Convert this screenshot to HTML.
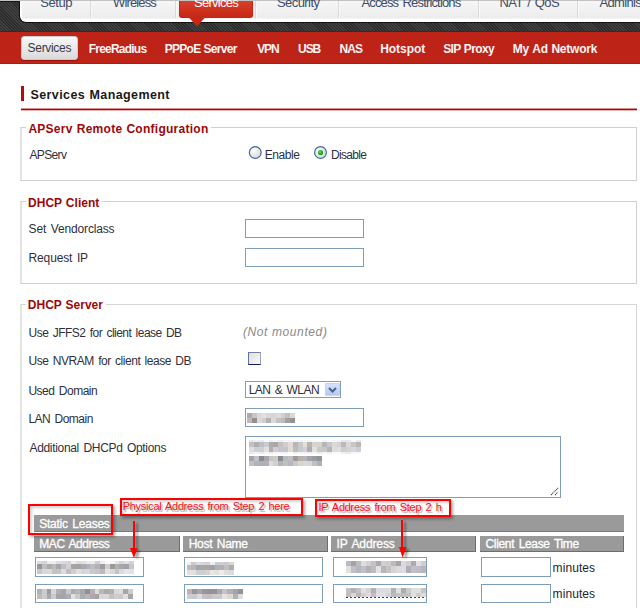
<!DOCTYPE html>
<html><head><meta charset="utf-8">
<style>
html,body{margin:0;padding:0;width:640px;height:608px;overflow:hidden;background:#fff;position:relative}
div{box-sizing:border-box}
.a{position:absolute}
.t{position:absolute;white-space:nowrap;font-family:"Liberation Sans",sans-serif;line-height:20px}
.inp{position:absolute;border:1px solid #7f9db9;background:#fff}
.hdr{position:absolute;background:#9a9a9a;border-right:1px solid #6e6e6e;border-bottom:1px solid #6e6e6e}
.div{position:absolute;top:1px;width:2px;height:17px;border-left:1px solid #dadada;border-right:1px solid #f9f9f9}
.box{position:absolute;border:2px solid #ff0000;box-shadow:2px 2px 3px rgba(0,0,0,0.35), inset 2px 2px 3px rgba(0,0,0,0.18)}
</style></head><body>
<!-- dark striped bar -->
<div class="a" style="left:0;top:0;width:640px;height:32px;background:repeating-linear-gradient(45deg,#2c2c2c 0px,#2c2c2c 1.1px,#404040 1.1px,#404040 2.2px)"></div>
<div class="a" style="left:0;top:31px;width:640px;height:1px;background:#173636"></div>
<div class="a" style="left:0;top:1px;width:20px;height:1px;background:#151515"></div>
<div class="a" style="left:0;top:0;width:640px;height:1px;background:#c2c2c2"></div>
<!-- tab container -->
<div class="a" style="left:19px;top:1px;width:640px;height:22px;border-left:1px solid #121212;border-bottom:1px solid #121212;border-bottom-left-radius:7px;box-shadow:inset 2px 0 1px #fff;background:linear-gradient(#f6f6f6 0px,#ececec 17px,#ffffff 18px,#ffffff 21px)"></div>
<div class="div" style="left:90px"></div>
<div class="div" style="left:175px"></div>
<div class="div" style="left:255px"></div>
<div class="div" style="left:338px"></div>
<div class="div" style="left:478px"></div>
<div class="div" style="left:577px"></div>
<!-- active tab -->
<div class="a" style="left:179px;top:1px;width:74px;height:17px;border:1px solid #d81e0e;border-top:none;border-radius:0 0 3px 3px;background:linear-gradient(#d8402a,#c52816)"></div>
<svg class="a" style="left:0;top:0" width="640" height="40"><polygon points="188.5,17 205.5,17 197,26.5" fill="#c82716"/></svg>
<!-- red submenu bar -->
<div class="a" style="left:0;top:32px;width:640px;height:32px;background:#bd2316"></div>
<div class="a" style="left:0;top:63px;width:640px;height:1px;background:#b51a12"></div>
<div class="a" style="left:21px;top:36px;width:57px;height:24px;border-radius:3px;border:1px solid #c9c9c9;background:linear-gradient(#f8f8f8,#dadada);box-shadow:0 1px 0 #9c1008"></div>
<!-- heading -->
<div class="a" style="left:21px;top:86px;width:3px;height:15px;background:#b80810"></div>
<div class="a" style="left:21px;top:108px;width:616px;height:3px;background:linear-gradient(rgba(180,0,0,0.45) 0px,rgba(180,0,0,0.45) 1px,#b20000 1px,#b20000 2px,rgba(180,0,0,0.3) 2px)"></div>
<!-- fieldsets -->
<div class="a" style="left:20px;top:127px;width:617px;height:54px;border:1px solid #cfcfcf;border-left:2px solid #e2e2e2"></div>
<div class="a" style="left:26px;top:120px;width:185px;height:14px;background:#fff"></div>
<div class="a" style="left:20px;top:201px;width:617px;height:83px;border:1px solid #cfcfcf;border-left:2px solid #e2e2e2"></div>
<div class="a" style="left:26px;top:194px;width:76px;height:14px;background:#fff"></div>
<div class="a" style="left:20px;top:304px;width:617px;height:330px;border:1px solid #d6d6d6;border-left:2px solid #e4e4e4"></div>
<div class="a" style="left:26px;top:297px;width:80px;height:14px;background:#fff"></div>
<!-- radios -->
<svg class="a" style="left:246px;top:145px" width="84" height="17">
 <defs><radialGradient id="rg" cx="0.35" cy="0.35" r="0.7"><stop offset="0" stop-color="#ffffff"/><stop offset="1" stop-color="#d8d8d4"/></radialGradient>
 <radialGradient id="gd" cx="0.4" cy="0.4" r="0.6"><stop offset="0" stop-color="#5fd85f"/><stop offset="1" stop-color="#0a9a0a"/></radialGradient></defs>
 <circle cx="9.25" cy="7.5" r="5.9" fill="url(#rg)" stroke="#3f6aa6" stroke-width="1.2"/>
 <circle cx="74.5" cy="7.5" r="5.9" fill="url(#rg)" stroke="#3f6aa6" stroke-width="1.2"/>
 <circle cx="74.5" cy="7.5" r="2.6" fill="url(#gd)"/>
</svg>
<!-- DHCP client inputs -->
<div class="inp" style="left:245px;top:219px;width:119px;height:19px"></div>
<div class="inp" style="left:245px;top:248px;width:119px;height:19px"></div>
<!-- checkbox -->
<div class="a" style="left:248px;top:352px;width:13px;height:13px;border:1px solid;border-color:#6e7fa0 #98a6c0 #15156c #5f7298;background:linear-gradient(135deg,#dededa,#fbfbfb)"></div>
<!-- select -->
<div class="inp" style="left:245px;top:381px;width:96px;height:17px"></div>
<div class="a" style="left:325px;top:383px;width:15px;height:13px;background:linear-gradient(#d6e2fb,#b4c8f4);border:1px solid #c3d3fd;border-radius:1px"></div>
<svg class="a" style="left:325px;top:383px" width="15" height="13"><polyline points="4,5 7.5,8.5 11,5" fill="none" stroke="#4d6185" stroke-width="2"/></svg>
<!-- LAN domain -->
<div class="inp" style="left:245px;top:408px;width:119px;height:19px"></div>
<!-- textarea -->
<div class="inp" style="left:245px;top:436px;width:316px;height:62px"></div>
<svg class="a" style="left:549px;top:485px" width="11" height="11"><line x1="2" y1="10" x2="9" y2="3" stroke="#444" stroke-width="1.1" stroke-dasharray="1.2,0.6"/><line x1="6" y1="10" x2="8.8" y2="7.2" stroke="#444" stroke-width="1.1" stroke-dasharray="1.2,0.6"/></svg>
<!-- static leases -->
<div class="a" style="left:34px;top:515px;width:590px;height:17px;background:#9a9a9a;border-bottom:1px solid #7a7a7a"></div>
<div class="hdr" style="left:34px;top:536px;width:146px;height:16px"></div>
<div class="hdr" style="left:183px;top:536px;width:145px;height:16px"></div>
<div class="hdr" style="left:331px;top:536px;width:145px;height:16px"></div>
<div class="hdr" style="left:480px;top:536px;width:144px;height:16px"></div>
<div class="inp" style="left:35px;top:557px;width:109px;height:20px"></div>
<div class="inp" style="left:35px;top:584px;width:109px;height:19px"></div>
<div class="inp" style="left:184px;top:557px;width:139px;height:20px"></div>
<div class="inp" style="left:184px;top:584px;width:139px;height:19px"></div>
<div class="inp" style="left:333px;top:557px;width:94px;height:20px"></div>
<div class="inp" style="left:333px;top:584px;width:94px;height:19px"></div>
<div class="inp" style="left:481px;top:557px;width:70px;height:20px"></div>
<div class="inp" style="left:481px;top:584px;width:70px;height:19px"></div>
<div style='position:absolute;left:247.40px;top:412.70px;width:4.98px;height:5.15px;background:rgb(174,171,175)'></div>
<div style='position:absolute;left:252.13px;top:412.70px;width:4.98px;height:5.15px;background:rgb(199,199,199)'></div>
<div style='position:absolute;left:256.86px;top:412.70px;width:4.98px;height:5.15px;background:rgb(217,216,219)'></div>
<div style='position:absolute;left:261.59px;top:412.70px;width:4.98px;height:5.15px;background:rgb(225,225,226)'></div>
<div style='position:absolute;left:266.32px;top:412.70px;width:4.98px;height:5.15px;background:rgb(213,216,215)'></div>
<div style='position:absolute;left:271.05px;top:412.70px;width:4.98px;height:5.15px;background:rgb(212,215,211)'></div>
<div style='position:absolute;left:275.78px;top:412.70px;width:4.98px;height:5.15px;background:rgb(216,219,226)'></div>
<div style='position:absolute;left:280.51px;top:412.70px;width:4.98px;height:5.15px;background:rgb(207,205,209)'></div>
<div style='position:absolute;left:285.24px;top:412.70px;width:4.98px;height:5.15px;background:rgb(187,194,195)'></div>
<div style='position:absolute;left:289.97px;top:412.70px;width:4.98px;height:5.15px;background:rgb(219,218,210)'></div>
<div style='position:absolute;left:247.40px;top:417.60px;width:4.98px;height:5.15px;background:rgb(187,185,190)'></div>
<div style='position:absolute;left:252.13px;top:417.60px;width:4.98px;height:5.15px;background:rgb(149,143,139)'></div>
<div style='position:absolute;left:256.86px;top:417.60px;width:4.98px;height:5.15px;background:rgb(217,218,224)'></div>
<div style='position:absolute;left:261.59px;top:417.60px;width:4.98px;height:5.15px;background:rgb(211,206,202)'></div>
<div style='position:absolute;left:266.32px;top:417.60px;width:4.98px;height:5.15px;background:rgb(180,176,181)'></div>
<div style='position:absolute;left:271.05px;top:417.60px;width:4.98px;height:5.15px;background:rgb(215,218,216)'></div>
<div style='position:absolute;left:275.78px;top:417.60px;width:4.98px;height:5.15px;background:rgb(195,194,191)'></div>
<div style='position:absolute;left:280.51px;top:417.60px;width:4.98px;height:5.15px;background:rgb(188,189,185)'></div>
<div style='position:absolute;left:285.24px;top:417.60px;width:4.98px;height:5.15px;background:rgb(164,158,165)'></div>
<div style='position:absolute;left:289.97px;top:417.60px;width:4.98px;height:5.15px;background:rgb(146,146,143)'></div>
<div style='position:absolute;left:249.20px;top:439.50px;width:5.10px;height:2.35px;background:rgb(231,233,232)'></div>
<div style='position:absolute;left:254.05px;top:439.50px;width:5.10px;height:2.35px;background:rgb(239,239,249)'></div>
<div style='position:absolute;left:258.90px;top:439.50px;width:5.10px;height:2.35px;background:rgb(235,232,238)'></div>
<div style='position:absolute;left:263.76px;top:439.50px;width:5.10px;height:2.35px;background:rgb(246,248,255)'></div>
<div style='position:absolute;left:268.61px;top:439.50px;width:5.10px;height:2.35px;background:rgb(238,240,241)'></div>
<div style='position:absolute;left:273.46px;top:439.50px;width:5.10px;height:2.35px;background:rgb(248,247,239)'></div>
<div style='position:absolute;left:278.31px;top:439.50px;width:5.10px;height:2.35px;background:rgb(240,235,242)'></div>
<div style='position:absolute;left:283.17px;top:439.50px;width:5.10px;height:2.35px;background:rgb(245,244,250)'></div>
<div style='position:absolute;left:288.02px;top:439.50px;width:5.10px;height:2.35px;background:rgb(248,240,248)'></div>
<div style='position:absolute;left:292.87px;top:439.50px;width:5.10px;height:2.35px;background:rgb(244,245,251)'></div>
<div style='position:absolute;left:297.72px;top:439.50px;width:5.10px;height:2.35px;background:rgb(240,241,250)'></div>
<div style='position:absolute;left:302.57px;top:439.50px;width:5.10px;height:2.35px;background:rgb(245,245,251)'></div>
<div style='position:absolute;left:307.43px;top:439.50px;width:5.10px;height:2.35px;background:rgb(247,245,238)'></div>
<div style='position:absolute;left:312.28px;top:439.50px;width:5.10px;height:2.35px;background:rgb(251,251,246)'></div>
<div style='position:absolute;left:317.13px;top:439.50px;width:5.10px;height:2.35px;background:rgb(250,249,243)'></div>
<div style='position:absolute;left:321.98px;top:439.50px;width:5.10px;height:2.35px;background:rgb(243,242,242)'></div>
<div style='position:absolute;left:326.83px;top:439.50px;width:5.10px;height:2.35px;background:rgb(253,248,254)'></div>
<div style='position:absolute;left:331.69px;top:439.50px;width:5.10px;height:2.35px;background:rgb(240,245,253)'></div>
<div style='position:absolute;left:336.54px;top:439.50px;width:5.10px;height:2.35px;background:rgb(242,241,247)'></div>
<div style='position:absolute;left:341.39px;top:439.50px;width:5.10px;height:2.35px;background:rgb(233,232,232)'></div>
<div style='position:absolute;left:346.24px;top:439.50px;width:5.10px;height:2.35px;background:rgb(231,231,237)'></div>
<div style='position:absolute;left:351.10px;top:439.50px;width:5.10px;height:2.35px;background:rgb(252,247,253)'></div>
<div style='position:absolute;left:355.95px;top:439.50px;width:5.10px;height:2.35px;background:rgb(236,234,231)'></div>
<div style='position:absolute;left:249.20px;top:441.60px;width:5.10px;height:5.25px;background:rgb(196,191,197)'></div>
<div style='position:absolute;left:254.05px;top:441.60px;width:5.10px;height:5.25px;background:rgb(175,175,175)'></div>
<div style='position:absolute;left:258.90px;top:441.60px;width:5.10px;height:5.25px;background:rgb(188,191,198)'></div>
<div style='position:absolute;left:263.76px;top:441.60px;width:5.10px;height:5.25px;background:rgb(198,204,209)'></div>
<div style='position:absolute;left:268.61px;top:441.60px;width:5.10px;height:5.25px;background:rgb(173,173,172)'></div>
<div style='position:absolute;left:273.46px;top:441.60px;width:5.10px;height:5.25px;background:rgb(168,167,176)'></div>
<div style='position:absolute;left:278.31px;top:441.60px;width:5.10px;height:5.25px;background:rgb(194,194,190)'></div>
<div style='position:absolute;left:283.17px;top:441.60px;width:5.10px;height:5.25px;background:rgb(209,205,207)'></div>
<div style='position:absolute;left:288.02px;top:441.60px;width:5.10px;height:5.25px;background:rgb(225,220,217)'></div>
<div style='position:absolute;left:292.87px;top:441.60px;width:5.10px;height:5.25px;background:rgb(184,182,182)'></div>
<div style='position:absolute;left:297.72px;top:441.60px;width:5.10px;height:5.25px;background:rgb(199,202,202)'></div>
<div style='position:absolute;left:302.57px;top:441.60px;width:5.10px;height:5.25px;background:rgb(225,224,217)'></div>
<div style='position:absolute;left:307.43px;top:441.60px;width:5.10px;height:5.25px;background:rgb(181,181,181)'></div>
<div style='position:absolute;left:312.28px;top:441.60px;width:5.10px;height:5.25px;background:rgb(211,213,205)'></div>
<div style='position:absolute;left:317.13px;top:441.60px;width:5.10px;height:5.25px;background:rgb(212,210,211)'></div>
<div style='position:absolute;left:321.98px;top:441.60px;width:5.10px;height:5.25px;background:rgb(182,181,185)'></div>
<div style='position:absolute;left:326.83px;top:441.60px;width:5.10px;height:5.25px;background:rgb(197,201,205)'></div>
<div style='position:absolute;left:331.69px;top:441.60px;width:5.10px;height:5.25px;background:rgb(218,218,211)'></div>
<div style='position:absolute;left:336.54px;top:441.60px;width:5.10px;height:5.25px;background:rgb(213,209,213)'></div>
<div style='position:absolute;left:341.39px;top:441.60px;width:5.10px;height:5.25px;background:rgb(184,186,192)'></div>
<div style='position:absolute;left:346.24px;top:441.60px;width:5.10px;height:5.25px;background:rgb(217,216,219)'></div>
<div style='position:absolute;left:351.10px;top:441.60px;width:5.10px;height:5.25px;background:rgb(198,198,200)'></div>
<div style='position:absolute;left:355.95px;top:441.60px;width:5.10px;height:5.25px;background:rgb(183,183,184)'></div>
<div style='position:absolute;left:249.20px;top:446.60px;width:5.10px;height:5.25px;background:rgb(225,222,227)'></div>
<div style='position:absolute;left:254.05px;top:446.60px;width:5.10px;height:5.25px;background:rgb(206,209,212)'></div>
<div style='position:absolute;left:258.90px;top:446.60px;width:5.10px;height:5.25px;background:rgb(207,208,212)'></div>
<div style='position:absolute;left:263.76px;top:446.60px;width:5.10px;height:5.25px;background:rgb(224,224,225)'></div>
<div style='position:absolute;left:268.61px;top:446.60px;width:5.10px;height:5.25px;background:rgb(181,172,181)'></div>
<div style='position:absolute;left:273.46px;top:446.60px;width:5.10px;height:5.25px;background:rgb(210,204,213)'></div>
<div style='position:absolute;left:278.31px;top:446.60px;width:5.10px;height:5.25px;background:rgb(200,196,200)'></div>
<div style='position:absolute;left:283.17px;top:446.60px;width:5.10px;height:5.25px;background:rgb(194,197,202)'></div>
<div style='position:absolute;left:288.02px;top:446.60px;width:5.10px;height:5.25px;background:rgb(221,219,216)'></div>
<div style='position:absolute;left:292.87px;top:446.60px;width:5.10px;height:5.25px;background:rgb(187,190,187)'></div>
<div style='position:absolute;left:297.72px;top:446.60px;width:5.10px;height:5.25px;background:rgb(199,202,204)'></div>
<div style='position:absolute;left:302.57px;top:446.60px;width:5.10px;height:5.25px;background:rgb(213,208,216)'></div>
<div style='position:absolute;left:307.43px;top:446.60px;width:5.10px;height:5.25px;background:rgb(172,173,181)'></div>
<div style='position:absolute;left:312.28px;top:446.60px;width:5.10px;height:5.25px;background:rgb(227,224,223)'></div>
<div style='position:absolute;left:317.13px;top:446.60px;width:5.10px;height:5.25px;background:rgb(204,200,196)'></div>
<div style='position:absolute;left:321.98px;top:446.60px;width:5.10px;height:5.25px;background:rgb(200,198,198)'></div>
<div style='position:absolute;left:326.83px;top:446.60px;width:5.10px;height:5.25px;background:rgb(183,179,183)'></div>
<div style='position:absolute;left:331.69px;top:446.60px;width:5.10px;height:5.25px;background:rgb(217,221,220)'></div>
<div style='position:absolute;left:336.54px;top:446.60px;width:5.10px;height:5.25px;background:rgb(225,224,224)'></div>
<div style='position:absolute;left:341.39px;top:446.60px;width:5.10px;height:5.25px;background:rgb(208,204,211)'></div>
<div style='position:absolute;left:346.24px;top:446.60px;width:5.10px;height:5.25px;background:rgb(211,211,211)'></div>
<div style='position:absolute;left:351.10px;top:446.60px;width:5.10px;height:5.25px;background:rgb(215,216,223)'></div>
<div style='position:absolute;left:355.95px;top:446.60px;width:5.10px;height:5.25px;background:rgb(209,206,211)'></div>
<div style='position:absolute;left:249.20px;top:451.60px;width:5.10px;height:2.15px;background:rgb(239,230,236)'></div>
<div style='position:absolute;left:254.05px;top:451.60px;width:5.10px;height:2.15px;background:rgb(249,242,250)'></div>
<div style='position:absolute;left:258.90px;top:451.60px;width:5.10px;height:2.15px;background:rgb(234,234,235)'></div>
<div style='position:absolute;left:263.76px;top:451.60px;width:5.10px;height:2.15px;background:rgb(245,244,240)'></div>
<div style='position:absolute;left:268.61px;top:451.60px;width:5.10px;height:2.15px;background:rgb(240,233,240)'></div>
<div style='position:absolute;left:273.46px;top:451.60px;width:5.10px;height:2.15px;background:rgb(245,247,244)'></div>
<div style='position:absolute;left:278.31px;top:451.60px;width:5.10px;height:2.15px;background:rgb(243,246,255)'></div>
<div style='position:absolute;left:283.17px;top:451.60px;width:5.10px;height:2.15px;background:rgb(244,244,236)'></div>
<div style='position:absolute;left:288.02px;top:451.60px;width:5.10px;height:2.15px;background:rgb(249,251,245)'></div>
<div style='position:absolute;left:292.87px;top:451.60px;width:5.10px;height:2.15px;background:rgb(244,238,236)'></div>
<div style='position:absolute;left:297.72px;top:451.60px;width:5.10px;height:2.15px;background:rgb(245,244,239)'></div>
<div style='position:absolute;left:302.57px;top:451.60px;width:5.10px;height:2.15px;background:rgb(246,239,246)'></div>
<div style='position:absolute;left:307.43px;top:451.60px;width:5.10px;height:2.15px;background:rgb(244,239,236)'></div>
<div style='position:absolute;left:312.28px;top:451.60px;width:5.10px;height:2.15px;background:rgb(250,243,248)'></div>
<div style='position:absolute;left:317.13px;top:451.60px;width:5.10px;height:2.15px;background:rgb(236,237,232)'></div>
<div style='position:absolute;left:321.98px;top:451.60px;width:5.10px;height:2.15px;background:rgb(246,245,252)'></div>
<div style='position:absolute;left:326.83px;top:451.60px;width:5.10px;height:2.15px;background:rgb(236,239,243)'></div>
<div style='position:absolute;left:331.69px;top:451.60px;width:5.10px;height:2.15px;background:rgb(251,248,247)'></div>
<div style='position:absolute;left:336.54px;top:451.60px;width:5.10px;height:2.15px;background:rgb(250,250,245)'></div>
<div style='position:absolute;left:341.39px;top:451.60px;width:5.10px;height:2.15px;background:rgb(241,238,235)'></div>
<div style='position:absolute;left:346.24px;top:451.60px;width:5.10px;height:2.15px;background:rgb(239,233,232)'></div>
<div style='position:absolute;left:351.10px;top:451.60px;width:5.10px;height:2.15px;background:rgb(244,248,251)'></div>
<div style='position:absolute;left:355.95px;top:451.60px;width:5.10px;height:2.15px;background:rgb(251,249,248)'></div>
<div style='position:absolute;left:249.20px;top:456.40px;width:5.10px;height:4.85px;background:rgb(170,162,169)'></div>
<div style='position:absolute;left:254.05px;top:456.40px;width:5.10px;height:4.85px;background:rgb(194,193,201)'></div>
<div style='position:absolute;left:258.89px;top:456.40px;width:5.10px;height:4.85px;background:rgb(139,138,140)'></div>
<div style='position:absolute;left:263.74px;top:456.40px;width:5.10px;height:4.85px;background:rgb(169,166,172)'></div>
<div style='position:absolute;left:268.59px;top:456.40px;width:5.10px;height:4.85px;background:rgb(199,197,192)'></div>
<div style='position:absolute;left:273.43px;top:456.40px;width:5.10px;height:4.85px;background:rgb(204,202,198)'></div>
<div style='position:absolute;left:278.28px;top:456.40px;width:5.10px;height:4.85px;background:rgb(134,139,147)'></div>
<div style='position:absolute;left:283.13px;top:456.40px;width:5.10px;height:4.85px;background:rgb(182,185,190)'></div>
<div style='position:absolute;left:287.97px;top:456.40px;width:5.10px;height:4.85px;background:rgb(195,189,195)'></div>
<div style='position:absolute;left:292.82px;top:456.40px;width:5.10px;height:4.85px;background:rgb(156,155,151)'></div>
<div style='position:absolute;left:297.67px;top:456.40px;width:5.10px;height:4.85px;background:rgb(180,177,173)'></div>
<div style='position:absolute;left:302.51px;top:456.40px;width:5.10px;height:4.85px;background:rgb(184,178,185)'></div>
<div style='position:absolute;left:307.36px;top:456.40px;width:5.10px;height:4.85px;background:rgb(158,163,172)'></div>
<div style='position:absolute;left:312.21px;top:456.40px;width:5.10px;height:4.85px;background:rgb(152,157,161)'></div>
<div style='position:absolute;left:317.05px;top:456.40px;width:5.10px;height:4.85px;background:rgb(144,150,152)'></div>
<div style='position:absolute;left:249.20px;top:461.00px;width:5.10px;height:4.85px;background:rgb(191,194,194)'></div>
<div style='position:absolute;left:254.05px;top:461.00px;width:5.10px;height:4.85px;background:rgb(174,180,185)'></div>
<div style='position:absolute;left:258.89px;top:461.00px;width:5.10px;height:4.85px;background:rgb(173,176,180)'></div>
<div style='position:absolute;left:263.74px;top:461.00px;width:5.10px;height:4.85px;background:rgb(182,173,182)'></div>
<div style='position:absolute;left:268.59px;top:461.00px;width:5.10px;height:4.85px;background:rgb(223,220,224)'></div>
<div style='position:absolute;left:273.43px;top:461.00px;width:5.10px;height:4.85px;background:rgb(209,207,211)'></div>
<div style='position:absolute;left:278.28px;top:461.00px;width:5.10px;height:4.85px;background:rgb(181,181,177)'></div>
<div style='position:absolute;left:283.13px;top:461.00px;width:5.10px;height:4.85px;background:rgb(192,192,185)'></div>
<div style='position:absolute;left:287.97px;top:461.00px;width:5.10px;height:4.85px;background:rgb(179,184,188)'></div>
<div style='position:absolute;left:292.82px;top:461.00px;width:5.10px;height:4.85px;background:rgb(203,199,205)'></div>
<div style='position:absolute;left:297.67px;top:461.00px;width:5.10px;height:4.85px;background:rgb(215,213,204)'></div>
<div style='position:absolute;left:302.51px;top:461.00px;width:5.10px;height:4.85px;background:rgb(218,216,217)'></div>
<div style='position:absolute;left:307.36px;top:461.00px;width:5.10px;height:4.85px;background:rgb(211,215,220)'></div>
<div style='position:absolute;left:312.21px;top:461.00px;width:5.10px;height:4.85px;background:rgb(194,191,195)'></div>
<div style='position:absolute;left:317.05px;top:461.00px;width:5.10px;height:4.85px;background:rgb(178,179,177)'></div>
<div style='position:absolute;left:37.00px;top:560.50px;width:5.10px;height:3.75px;background:rgb(214,220,227)'></div>
<div style='position:absolute;left:41.85px;top:560.50px;width:5.10px;height:3.75px;background:rgb(212,212,215)'></div>
<div style='position:absolute;left:46.70px;top:560.50px;width:5.10px;height:3.75px;background:rgb(234,238,248)'></div>
<div style='position:absolute;left:51.55px;top:560.50px;width:5.10px;height:3.75px;background:rgb(235,237,243)'></div>
<div style='position:absolute;left:56.40px;top:560.50px;width:5.10px;height:3.75px;background:rgb(223,221,227)'></div>
<div style='position:absolute;left:61.25px;top:560.50px;width:5.10px;height:3.75px;background:rgb(221,217,223)'></div>
<div style='position:absolute;left:66.10px;top:560.50px;width:5.10px;height:3.75px;background:rgb(214,212,213)'></div>
<div style='position:absolute;left:70.95px;top:560.50px;width:5.10px;height:3.75px;background:rgb(240,236,244)'></div>
<div style='position:absolute;left:75.80px;top:560.50px;width:5.10px;height:3.75px;background:rgb(224,222,220)'></div>
<div style='position:absolute;left:80.65px;top:560.50px;width:5.10px;height:3.75px;background:rgb(226,223,226)'></div>
<div style='position:absolute;left:85.50px;top:560.50px;width:5.10px;height:3.75px;background:rgb(238,234,230)'></div>
<div style='position:absolute;left:90.35px;top:560.50px;width:5.10px;height:3.75px;background:rgb(236,233,239)'></div>
<div style='position:absolute;left:95.20px;top:560.50px;width:5.10px;height:3.75px;background:rgb(205,208,207)'></div>
<div style='position:absolute;left:100.05px;top:560.50px;width:5.10px;height:3.75px;background:rgb(242,236,241)'></div>
<div style='position:absolute;left:104.90px;top:560.50px;width:5.10px;height:3.75px;background:rgb(250,249,253)'></div>
<div style='position:absolute;left:109.75px;top:560.50px;width:5.10px;height:3.75px;background:rgb(243,245,248)'></div>
<div style='position:absolute;left:114.60px;top:560.50px;width:5.10px;height:3.75px;background:rgb(234,230,227)'></div>
<div style='position:absolute;left:119.45px;top:560.50px;width:5.10px;height:3.75px;background:rgb(211,214,222)'></div>
<div style='position:absolute;left:124.30px;top:560.50px;width:5.10px;height:3.75px;background:rgb(226,226,223)'></div>
<div style='position:absolute;left:129.15px;top:560.50px;width:5.10px;height:3.75px;background:rgb(207,211,219)'></div>
<div style='position:absolute;left:37.00px;top:564.00px;width:5.10px;height:5.25px;background:rgb(153,151,153)'></div>
<div style='position:absolute;left:41.85px;top:564.00px;width:5.10px;height:5.25px;background:rgb(191,191,191)'></div>
<div style='position:absolute;left:46.70px;top:564.00px;width:5.10px;height:5.25px;background:rgb(172,173,169)'></div>
<div style='position:absolute;left:51.55px;top:564.00px;width:5.10px;height:5.25px;background:rgb(189,186,191)'></div>
<div style='position:absolute;left:56.40px;top:564.00px;width:5.10px;height:5.25px;background:rgb(164,168,172)'></div>
<div style='position:absolute;left:61.25px;top:564.00px;width:5.10px;height:5.25px;background:rgb(193,190,194)'></div>
<div style='position:absolute;left:66.10px;top:564.00px;width:5.10px;height:5.25px;background:rgb(212,208,214)'></div>
<div style='position:absolute;left:70.95px;top:564.00px;width:5.10px;height:5.25px;background:rgb(166,166,159)'></div>
<div style='position:absolute;left:75.80px;top:564.00px;width:5.10px;height:5.25px;background:rgb(162,162,163)'></div>
<div style='position:absolute;left:80.65px;top:564.00px;width:5.10px;height:5.25px;background:rgb(170,169,174)'></div>
<div style='position:absolute;left:85.50px;top:564.00px;width:5.10px;height:5.25px;background:rgb(175,178,189)'></div>
<div style='position:absolute;left:90.35px;top:564.00px;width:5.10px;height:5.25px;background:rgb(190,188,190)'></div>
<div style='position:absolute;left:95.20px;top:564.00px;width:5.10px;height:5.25px;background:rgb(180,176,182)'></div>
<div style='position:absolute;left:100.05px;top:564.00px;width:5.10px;height:5.25px;background:rgb(159,155,159)'></div>
<div style='position:absolute;left:104.90px;top:564.00px;width:5.10px;height:5.25px;background:rgb(205,207,205)'></div>
<div style='position:absolute;left:109.75px;top:564.00px;width:5.10px;height:5.25px;background:rgb(154,154,153)'></div>
<div style='position:absolute;left:114.60px;top:564.00px;width:5.10px;height:5.25px;background:rgb(177,179,178)'></div>
<div style='position:absolute;left:119.45px;top:564.00px;width:5.10px;height:5.25px;background:rgb(162,167,176)'></div>
<div style='position:absolute;left:124.30px;top:564.00px;width:5.10px;height:5.25px;background:rgb(168,160,169)'></div>
<div style='position:absolute;left:129.15px;top:564.00px;width:5.10px;height:5.25px;background:rgb(200,198,201)'></div>
<div style='position:absolute;left:37.00px;top:569.00px;width:5.10px;height:5.25px;background:rgb(196,200,206)'></div>
<div style='position:absolute;left:41.85px;top:569.00px;width:5.10px;height:5.25px;background:rgb(218,214,220)'></div>
<div style='position:absolute;left:46.70px;top:569.00px;width:5.10px;height:5.25px;background:rgb(218,218,212)'></div>
<div style='position:absolute;left:51.55px;top:569.00px;width:5.10px;height:5.25px;background:rgb(199,194,190)'></div>
<div style='position:absolute;left:56.40px;top:569.00px;width:5.10px;height:5.25px;background:rgb(194,196,197)'></div>
<div style='position:absolute;left:61.25px;top:569.00px;width:5.10px;height:5.25px;background:rgb(218,221,223)'></div>
<div style='position:absolute;left:66.10px;top:569.00px;width:5.10px;height:5.25px;background:rgb(193,188,198)'></div>
<div style='position:absolute;left:70.95px;top:569.00px;width:5.10px;height:5.25px;background:rgb(207,207,205)'></div>
<div style='position:absolute;left:75.80px;top:569.00px;width:5.10px;height:5.25px;background:rgb(224,224,227)'></div>
<div style='position:absolute;left:80.65px;top:569.00px;width:5.10px;height:5.25px;background:rgb(215,214,215)'></div>
<div style='position:absolute;left:85.50px;top:569.00px;width:5.10px;height:5.25px;background:rgb(216,216,220)'></div>
<div style='position:absolute;left:90.35px;top:569.00px;width:5.10px;height:5.25px;background:rgb(204,200,197)'></div>
<div style='position:absolute;left:95.20px;top:569.00px;width:5.10px;height:5.25px;background:rgb(198,196,200)'></div>
<div style='position:absolute;left:100.05px;top:569.00px;width:5.10px;height:5.25px;background:rgb(186,187,194)'></div>
<div style='position:absolute;left:104.90px;top:569.00px;width:5.10px;height:5.25px;background:rgb(230,226,222)'></div>
<div style='position:absolute;left:109.75px;top:569.00px;width:5.10px;height:5.25px;background:rgb(219,215,218)'></div>
<div style='position:absolute;left:114.60px;top:569.00px;width:5.10px;height:5.25px;background:rgb(196,194,196)'></div>
<div style='position:absolute;left:119.45px;top:569.00px;width:5.10px;height:5.25px;background:rgb(223,218,214)'></div>
<div style='position:absolute;left:124.30px;top:569.00px;width:5.10px;height:5.25px;background:rgb(227,230,234)'></div>
<div style='position:absolute;left:129.15px;top:569.00px;width:5.10px;height:5.25px;background:rgb(229,224,230)'></div>
<div style='position:absolute;left:37.00px;top:589.00px;width:5.05px;height:5.25px;background:rgb(174,179,179)'></div>
<div style='position:absolute;left:41.80px;top:589.00px;width:5.05px;height:5.25px;background:rgb(205,204,205)'></div>
<div style='position:absolute;left:46.60px;top:589.00px;width:5.05px;height:5.25px;background:rgb(156,157,166)'></div>
<div style='position:absolute;left:51.40px;top:589.00px;width:5.05px;height:5.25px;background:rgb(216,213,212)'></div>
<div style='position:absolute;left:56.20px;top:589.00px;width:5.05px;height:5.25px;background:rgb(177,174,171)'></div>
<div style='position:absolute;left:61.00px;top:589.00px;width:5.05px;height:5.25px;background:rgb(165,166,169)'></div>
<div style='position:absolute;left:65.80px;top:589.00px;width:5.05px;height:5.25px;background:rgb(204,199,205)'></div>
<div style='position:absolute;left:70.60px;top:589.00px;width:5.05px;height:5.25px;background:rgb(172,172,172)'></div>
<div style='position:absolute;left:75.40px;top:589.00px;width:5.05px;height:5.25px;background:rgb(177,183,187)'></div>
<div style='position:absolute;left:80.20px;top:589.00px;width:5.05px;height:5.25px;background:rgb(164,169,172)'></div>
<div style='position:absolute;left:85.00px;top:589.00px;width:5.05px;height:5.25px;background:rgb(144,145,152)'></div>
<div style='position:absolute;left:89.80px;top:589.00px;width:5.05px;height:5.25px;background:rgb(178,178,180)'></div>
<div style='position:absolute;left:94.60px;top:589.00px;width:5.05px;height:5.25px;background:rgb(222,220,218)'></div>
<div style='position:absolute;left:99.40px;top:589.00px;width:5.05px;height:5.25px;background:rgb(180,184,190)'></div>
<div style='position:absolute;left:104.20px;top:589.00px;width:5.05px;height:5.25px;background:rgb(174,170,164)'></div>
<div style='position:absolute;left:109.00px;top:589.00px;width:5.05px;height:5.25px;background:rgb(177,178,175)'></div>
<div style='position:absolute;left:113.80px;top:589.00px;width:5.05px;height:5.25px;background:rgb(218,217,218)'></div>
<div style='position:absolute;left:118.60px;top:589.00px;width:5.05px;height:5.25px;background:rgb(219,222,219)'></div>
<div style='position:absolute;left:123.40px;top:589.00px;width:5.05px;height:5.25px;background:rgb(170,164,171)'></div>
<div style='position:absolute;left:128.20px;top:589.00px;width:5.05px;height:5.25px;background:rgb(202,203,212)'></div>
<div style='position:absolute;left:37.00px;top:594.00px;width:5.05px;height:5.25px;background:rgb(190,187,191)'></div>
<div style='position:absolute;left:41.80px;top:594.00px;width:5.05px;height:5.25px;background:rgb(204,202,205)'></div>
<div style='position:absolute;left:46.60px;top:594.00px;width:5.05px;height:5.25px;background:rgb(170,168,174)'></div>
<div style='position:absolute;left:51.40px;top:594.00px;width:5.05px;height:5.25px;background:rgb(205,201,209)'></div>
<div style='position:absolute;left:56.20px;top:594.00px;width:5.05px;height:5.25px;background:rgb(162,165,171)'></div>
<div style='position:absolute;left:61.00px;top:594.00px;width:5.05px;height:5.25px;background:rgb(161,165,170)'></div>
<div style='position:absolute;left:65.80px;top:594.00px;width:5.05px;height:5.25px;background:rgb(170,173,181)'></div>
<div style='position:absolute;left:70.60px;top:594.00px;width:5.05px;height:5.25px;background:rgb(226,225,223)'></div>
<div style='position:absolute;left:75.40px;top:594.00px;width:5.05px;height:5.25px;background:rgb(201,202,202)'></div>
<div style='position:absolute;left:80.20px;top:594.00px;width:5.05px;height:5.25px;background:rgb(171,174,173)'></div>
<div style='position:absolute;left:85.00px;top:594.00px;width:5.05px;height:5.25px;background:rgb(187,180,188)'></div>
<div style='position:absolute;left:89.80px;top:594.00px;width:5.05px;height:5.25px;background:rgb(173,168,173)'></div>
<div style='position:absolute;left:94.60px;top:594.00px;width:5.05px;height:5.25px;background:rgb(165,164,163)'></div>
<div style='position:absolute;left:99.40px;top:594.00px;width:5.05px;height:5.25px;background:rgb(215,213,218)'></div>
<div style='position:absolute;left:104.20px;top:594.00px;width:5.05px;height:5.25px;background:rgb(214,218,221)'></div>
<div style='position:absolute;left:109.00px;top:594.00px;width:5.05px;height:5.25px;background:rgb(198,194,188)'></div>
<div style='position:absolute;left:113.80px;top:594.00px;width:5.05px;height:5.25px;background:rgb(207,204,206)'></div>
<div style='position:absolute;left:118.60px;top:594.00px;width:5.05px;height:5.25px;background:rgb(200,199,204)'></div>
<div style='position:absolute;left:123.40px;top:594.00px;width:5.05px;height:5.25px;background:rgb(224,224,222)'></div>
<div style='position:absolute;left:128.20px;top:594.00px;width:5.05px;height:5.25px;background:rgb(165,167,163)'></div>
<div style='position:absolute;left:186.60px;top:561.80px;width:4.93px;height:3.45px;background:rgb(236,239,238)'></div>
<div style='position:absolute;left:191.28px;top:561.80px;width:4.93px;height:3.45px;background:rgb(201,204,203)'></div>
<div style='position:absolute;left:195.96px;top:561.80px;width:4.93px;height:3.45px;background:rgb(217,222,230)'></div>
<div style='position:absolute;left:200.64px;top:561.80px;width:4.93px;height:3.45px;background:rgb(210,214,218)'></div>
<div style='position:absolute;left:205.32px;top:561.80px;width:4.93px;height:3.45px;background:rgb(212,208,212)'></div>
<div style='position:absolute;left:210.00px;top:561.80px;width:4.93px;height:3.45px;background:rgb(234,240,243)'></div>
<div style='position:absolute;left:214.68px;top:561.80px;width:4.93px;height:3.45px;background:rgb(202,204,212)'></div>
<div style='position:absolute;left:219.36px;top:561.80px;width:4.93px;height:3.45px;background:rgb(207,208,206)'></div>
<div style='position:absolute;left:224.04px;top:561.80px;width:4.93px;height:3.45px;background:rgb(204,200,207)'></div>
<div style='position:absolute;left:228.72px;top:561.80px;width:4.93px;height:3.45px;background:rgb(217,212,214)'></div>
<div style='position:absolute;left:186.60px;top:565.00px;width:4.93px;height:5.25px;background:rgb(192,187,192)'></div>
<div style='position:absolute;left:191.28px;top:565.00px;width:4.93px;height:5.25px;background:rgb(186,181,191)'></div>
<div style='position:absolute;left:195.96px;top:565.00px;width:4.93px;height:5.25px;background:rgb(167,165,165)'></div>
<div style='position:absolute;left:200.64px;top:565.00px;width:4.93px;height:5.25px;background:rgb(171,167,162)'></div>
<div style='position:absolute;left:205.32px;top:565.00px;width:4.93px;height:5.25px;background:rgb(170,166,167)'></div>
<div style='position:absolute;left:210.00px;top:565.00px;width:4.93px;height:5.25px;background:rgb(161,163,163)'></div>
<div style='position:absolute;left:214.68px;top:565.00px;width:4.93px;height:5.25px;background:rgb(176,180,186)'></div>
<div style='position:absolute;left:219.36px;top:565.00px;width:4.93px;height:5.25px;background:rgb(182,175,182)'></div>
<div style='position:absolute;left:224.04px;top:565.00px;width:4.93px;height:5.25px;background:rgb(198,190,199)'></div>
<div style='position:absolute;left:228.72px;top:565.00px;width:4.93px;height:5.25px;background:rgb(171,175,174)'></div>
<div style='position:absolute;left:186.60px;top:570.00px;width:4.93px;height:5.25px;background:rgb(226,223,227)'></div>
<div style='position:absolute;left:191.28px;top:570.00px;width:4.93px;height:5.25px;background:rgb(227,226,218)'></div>
<div style='position:absolute;left:195.96px;top:570.00px;width:4.93px;height:5.25px;background:rgb(204,208,212)'></div>
<div style='position:absolute;left:200.64px;top:570.00px;width:4.93px;height:5.25px;background:rgb(204,208,204)'></div>
<div style='position:absolute;left:205.32px;top:570.00px;width:4.93px;height:5.25px;background:rgb(214,208,215)'></div>
<div style='position:absolute;left:210.00px;top:570.00px;width:4.93px;height:5.25px;background:rgb(232,232,225)'></div>
<div style='position:absolute;left:214.68px;top:570.00px;width:4.93px;height:5.25px;background:rgb(228,225,219)'></div>
<div style='position:absolute;left:219.36px;top:570.00px;width:4.93px;height:5.25px;background:rgb(239,237,230)'></div>
<div style='position:absolute;left:224.04px;top:570.00px;width:4.93px;height:5.25px;background:rgb(224,223,217)'></div>
<div style='position:absolute;left:228.72px;top:570.00px;width:4.93px;height:5.25px;background:rgb(214,220,223)'></div>
<div style='position:absolute;left:186.60px;top:589.00px;width:5.36px;height:5.25px;background:rgb(186,179,185)'></div>
<div style='position:absolute;left:191.71px;top:589.00px;width:5.36px;height:5.25px;background:rgb(150,149,160)'></div>
<div style='position:absolute;left:196.82px;top:589.00px;width:5.36px;height:5.25px;background:rgb(165,168,168)'></div>
<div style='position:absolute;left:201.93px;top:589.00px;width:5.36px;height:5.25px;background:rgb(150,150,155)'></div>
<div style='position:absolute;left:207.04px;top:589.00px;width:5.36px;height:5.25px;background:rgb(151,147,148)'></div>
<div style='position:absolute;left:212.15px;top:589.00px;width:5.36px;height:5.25px;background:rgb(152,146,149)'></div>
<div style='position:absolute;left:217.25px;top:589.00px;width:5.36px;height:5.25px;background:rgb(170,167,168)'></div>
<div style='position:absolute;left:222.36px;top:589.00px;width:5.36px;height:5.25px;background:rgb(199,191,201)'></div>
<div style='position:absolute;left:227.47px;top:589.00px;width:5.36px;height:5.25px;background:rgb(181,175,185)'></div>
<div style='position:absolute;left:232.58px;top:589.00px;width:5.36px;height:5.25px;background:rgb(158,165,168)'></div>
<div style='position:absolute;left:237.69px;top:589.00px;width:5.36px;height:5.25px;background:rgb(149,146,153)'></div>
<div style='position:absolute;left:186.60px;top:594.00px;width:5.36px;height:5.25px;background:rgb(204,205,206)'></div>
<div style='position:absolute;left:191.71px;top:594.00px;width:5.36px;height:5.25px;background:rgb(200,202,209)'></div>
<div style='position:absolute;left:196.82px;top:594.00px;width:5.36px;height:5.25px;background:rgb(220,219,223)'></div>
<div style='position:absolute;left:201.93px;top:594.00px;width:5.36px;height:5.25px;background:rgb(198,192,199)'></div>
<div style='position:absolute;left:207.04px;top:594.00px;width:5.36px;height:5.25px;background:rgb(194,189,199)'></div>
<div style='position:absolute;left:212.15px;top:594.00px;width:5.36px;height:5.25px;background:rgb(205,200,208)'></div>
<div style='position:absolute;left:217.25px;top:594.00px;width:5.36px;height:5.25px;background:rgb(199,203,203)'></div>
<div style='position:absolute;left:222.36px;top:594.00px;width:5.36px;height:5.25px;background:rgb(227,227,227)'></div>
<div style='position:absolute;left:227.47px;top:594.00px;width:5.36px;height:5.25px;background:rgb(220,217,209)'></div>
<div style='position:absolute;left:232.58px;top:594.00px;width:5.36px;height:5.25px;background:rgb(177,177,184)'></div>
<div style='position:absolute;left:237.69px;top:594.00px;width:5.36px;height:5.25px;background:rgb(218,223,226)'></div>
<div style='position:absolute;left:346.00px;top:561.00px;width:5.25px;height:5.25px;background:rgb(186,187,194)'></div>
<div style='position:absolute;left:351.00px;top:561.00px;width:5.25px;height:5.25px;background:rgb(164,164,167)'></div>
<div style='position:absolute;left:356.00px;top:561.00px;width:5.25px;height:5.25px;background:rgb(189,190,185)'></div>
<div style='position:absolute;left:361.00px;top:561.00px;width:5.25px;height:5.25px;background:rgb(224,223,215)'></div>
<div style='position:absolute;left:366.00px;top:561.00px;width:5.25px;height:5.25px;background:rgb(212,210,209)'></div>
<div style='position:absolute;left:371.00px;top:561.00px;width:5.25px;height:5.25px;background:rgb(198,193,199)'></div>
<div style='position:absolute;left:376.00px;top:561.00px;width:5.25px;height:5.25px;background:rgb(171,172,176)'></div>
<div style='position:absolute;left:381.00px;top:561.00px;width:5.25px;height:5.25px;background:rgb(213,205,211)'></div>
<div style='position:absolute;left:386.00px;top:561.00px;width:5.25px;height:5.25px;background:rgb(205,204,211)'></div>
<div style='position:absolute;left:391.00px;top:561.00px;width:5.25px;height:5.25px;background:rgb(188,186,188)'></div>
<div style='position:absolute;left:396.00px;top:561.00px;width:5.25px;height:5.25px;background:rgb(168,166,164)'></div>
<div style='position:absolute;left:401.00px;top:561.00px;width:5.25px;height:5.25px;background:rgb(217,219,222)'></div>
<div style='position:absolute;left:406.00px;top:561.00px;width:5.25px;height:5.25px;background:rgb(208,206,206)'></div>
<div style='position:absolute;left:411.00px;top:561.00px;width:5.25px;height:5.25px;background:rgb(175,170,177)'></div>
<div style='position:absolute;left:416.00px;top:561.00px;width:5.25px;height:5.25px;background:rgb(226,222,227)'></div>
<div style='position:absolute;left:421.00px;top:561.00px;width:5.25px;height:5.25px;background:rgb(208,205,207)'></div>
<div style='position:absolute;left:346.00px;top:566.00px;width:5.25px;height:6.85px;background:rgb(225,225,222)'></div>
<div style='position:absolute;left:351.00px;top:566.00px;width:5.25px;height:6.85px;background:rgb(194,192,198)'></div>
<div style='position:absolute;left:356.00px;top:566.00px;width:5.25px;height:6.85px;background:rgb(178,184,190)'></div>
<div style='position:absolute;left:361.00px;top:566.00px;width:5.25px;height:6.85px;background:rgb(191,192,201)'></div>
<div style='position:absolute;left:366.00px;top:566.00px;width:5.25px;height:6.85px;background:rgb(179,176,182)'></div>
<div style='position:absolute;left:371.00px;top:566.00px;width:5.25px;height:6.85px;background:rgb(187,190,189)'></div>
<div style='position:absolute;left:376.00px;top:566.00px;width:5.25px;height:6.85px;background:rgb(229,224,228)'></div>
<div style='position:absolute;left:381.00px;top:566.00px;width:5.25px;height:6.85px;background:rgb(185,182,177)'></div>
<div style='position:absolute;left:386.00px;top:566.00px;width:5.25px;height:6.85px;background:rgb(198,194,196)'></div>
<div style='position:absolute;left:391.00px;top:566.00px;width:5.25px;height:6.85px;background:rgb(213,213,213)'></div>
<div style='position:absolute;left:396.00px;top:566.00px;width:5.25px;height:6.85px;background:rgb(223,216,221)'></div>
<div style='position:absolute;left:401.00px;top:566.00px;width:5.25px;height:6.85px;background:rgb(225,218,227)'></div>
<div style='position:absolute;left:406.00px;top:566.00px;width:5.25px;height:6.85px;background:rgb(176,173,180)'></div>
<div style='position:absolute;left:411.00px;top:566.00px;width:5.25px;height:6.85px;background:rgb(193,192,198)'></div>
<div style='position:absolute;left:416.00px;top:566.00px;width:5.25px;height:6.85px;background:rgb(188,189,199)'></div>
<div style='position:absolute;left:421.00px;top:566.00px;width:5.25px;height:6.85px;background:rgb(185,181,185)'></div>
<div style='position:absolute;left:346.00px;top:588.30px;width:5.25px;height:4.95px;background:rgb(197,192,197)'></div>
<div style='position:absolute;left:351.00px;top:588.30px;width:5.25px;height:4.95px;background:rgb(176,178,180)'></div>
<div style='position:absolute;left:356.00px;top:588.30px;width:5.25px;height:4.95px;background:rgb(195,192,200)'></div>
<div style='position:absolute;left:361.00px;top:588.30px;width:5.25px;height:4.95px;background:rgb(225,223,227)'></div>
<div style='position:absolute;left:366.00px;top:588.30px;width:5.25px;height:4.95px;background:rgb(216,212,207)'></div>
<div style='position:absolute;left:371.00px;top:588.30px;width:5.25px;height:4.95px;background:rgb(178,179,182)'></div>
<div style='position:absolute;left:376.00px;top:588.30px;width:5.25px;height:4.95px;background:rgb(221,219,222)'></div>
<div style='position:absolute;left:381.00px;top:588.30px;width:5.25px;height:4.95px;background:rgb(218,221,230)'></div>
<div style='position:absolute;left:386.00px;top:588.30px;width:5.25px;height:4.95px;background:rgb(221,220,222)'></div>
<div style='position:absolute;left:391.00px;top:588.30px;width:5.25px;height:4.95px;background:rgb(176,180,186)'></div>
<div style='position:absolute;left:396.00px;top:588.30px;width:5.25px;height:4.95px;background:rgb(224,225,220)'></div>
<div style='position:absolute;left:401.00px;top:588.30px;width:5.25px;height:4.95px;background:rgb(172,174,171)'></div>
<div style='position:absolute;left:406.00px;top:588.30px;width:5.25px;height:4.95px;background:rgb(201,205,202)'></div>
<div style='position:absolute;left:411.00px;top:588.30px;width:5.25px;height:4.95px;background:rgb(223,224,222)'></div>
<div style='position:absolute;left:416.00px;top:588.30px;width:5.25px;height:4.95px;background:rgb(221,224,220)'></div>
<div style='position:absolute;left:421.00px;top:588.30px;width:5.25px;height:4.95px;background:rgb(199,198,199)'></div>
<div style='position:absolute;left:346.00px;top:593.00px;width:5.25px;height:4.25px;background:rgb(190,191,184)'></div>
<div style='position:absolute;left:351.00px;top:593.00px;width:5.25px;height:4.25px;background:rgb(215,219,216)'></div>
<div style='position:absolute;left:356.00px;top:593.00px;width:5.25px;height:4.25px;background:rgb(187,182,190)'></div>
<div style='position:absolute;left:361.00px;top:593.00px;width:5.25px;height:4.25px;background:rgb(209,209,214)'></div>
<div style='position:absolute;left:366.00px;top:593.00px;width:5.25px;height:4.25px;background:rgb(223,218,227)'></div>
<div style='position:absolute;left:371.00px;top:593.00px;width:5.25px;height:4.25px;background:rgb(196,192,194)'></div>
<div style='position:absolute;left:376.00px;top:593.00px;width:5.25px;height:4.25px;background:rgb(220,223,230)'></div>
<div style='position:absolute;left:381.00px;top:593.00px;width:5.25px;height:4.25px;background:rgb(219,224,226)'></div>
<div style='position:absolute;left:386.00px;top:593.00px;width:5.25px;height:4.25px;background:rgb(209,210,219)'></div>
<div style='position:absolute;left:391.00px;top:593.00px;width:5.25px;height:4.25px;background:rgb(188,186,193)'></div>
<div style='position:absolute;left:396.00px;top:593.00px;width:5.25px;height:4.25px;background:rgb(197,194,195)'></div>
<div style='position:absolute;left:401.00px;top:593.00px;width:5.25px;height:4.25px;background:rgb(194,192,185)'></div>
<div style='position:absolute;left:406.00px;top:593.00px;width:5.25px;height:4.25px;background:rgb(191,192,200)'></div>
<div style='position:absolute;left:411.00px;top:593.00px;width:5.25px;height:4.25px;background:rgb(223,226,227)'></div>
<div style='position:absolute;left:416.00px;top:593.00px;width:5.25px;height:4.25px;background:rgb(207,204,202)'></div>
<div style='position:absolute;left:421.00px;top:593.00px;width:5.25px;height:4.25px;background:rgb(223,221,220)'></div><div style='position:absolute;left:346px;top:596.5px;width:80px;height:1px;background:repeating-linear-gradient(90deg,#444 0 2px,transparent 2px 4px)'></div>
<div class='t' style='left:40.25px;top:-7.40px;font-size:13px;font-weight:400;font-style:normal;color:#414b64;letter-spacing:-0.413px;word-spacing:1.5px;'>Setup</div>
<div class='t' style='left:113.00px;top:-7.40px;font-size:13px;font-weight:400;font-style:normal;color:#414b64;letter-spacing:-0.857px;word-spacing:1.5px;'>Wireless</div>
<div class='t' style='left:194.00px;top:-7.40px;font-size:13px;font-weight:400;font-style:normal;color:#ffffff;letter-spacing:-0.714px;word-spacing:1.5px;'>Services</div>
<div class='t' style='left:277.00px;top:-7.40px;font-size:13px;font-weight:400;font-style:normal;color:#414b64;letter-spacing:-0.571px;word-spacing:1.5px;'>Security</div>
<div class='t' style='left:361.40px;top:-7.40px;font-size:13px;font-weight:400;font-style:normal;color:#414b64;letter-spacing:-0.839px;word-spacing:1.5px;'>Access Restrictions</div>
<div class='t' style='left:499.50px;top:-7.40px;font-size:13px;font-weight:400;font-style:normal;color:#414b64;letter-spacing:-0.562px;word-spacing:1.5px;'>NAT / QoS</div>
<div class='t' style='left:599.40px;top:-7.40px;font-size:13px;font-weight:400;font-style:normal;color:#414b64;letter-spacing:-0.646px;word-spacing:1.5px;'>Administration</div>
<div class='t' style='left:27.60px;top:38.30px;font-size:12px;font-weight:400;font-style:normal;color:#3a3a44;letter-spacing:-0.314px;word-spacing:1.5px;'>Services</div>
<div class='t' style='left:88.80px;top:38.60px;font-size:12px;font-weight:700;font-style:normal;color:#fff4f4;letter-spacing:-0.789px;word-spacing:0.5px;'>FreeRadius</div>
<div class='t' style='left:164.70px;top:38.60px;font-size:12px;font-weight:700;font-style:normal;color:#fff4f4;letter-spacing:-0.718px;word-spacing:0.5px;'>PPPoE Server</div>
<div class='t' style='left:257.20px;top:38.60px;font-size:12px;font-weight:700;font-style:normal;color:#fff4f4;letter-spacing:-1.150px;word-spacing:0.5px;'>VPN</div>
<div class='t' style='left:298.10px;top:38.60px;font-size:12px;font-weight:700;font-style:normal;color:#fff4f4;letter-spacing:-1.100px;word-spacing:0.5px;'>USB</div>
<div class='t' style='left:339.40px;top:38.60px;font-size:12px;font-weight:700;font-style:normal;color:#fff4f4;letter-spacing:-0.800px;word-spacing:0.5px;'>NAS</div>
<div class='t' style='left:380.20px;top:38.60px;font-size:12px;font-weight:700;font-style:normal;color:#fff4f4;letter-spacing:-0.050px;word-spacing:0.5px;'>Hotspot</div>
<div class='t' style='left:443.20px;top:38.60px;font-size:12px;font-weight:700;font-style:normal;color:#fff4f4;letter-spacing:-0.600px;word-spacing:0.5px;'>SIP Proxy</div>
<div class='t' style='left:512.80px;top:38.60px;font-size:12px;font-weight:700;font-style:normal;color:#fff4f4;letter-spacing:-0.217px;word-spacing:0.5px;'>My Ad Network</div>
<div class='t' style='left:30.50px;top:84.60px;font-size:12.5px;font-weight:700;font-style:normal;color:#1a1a1a;letter-spacing:0.400px;word-spacing:0.5px;'>Services Management</div>
<div class='t' style='left:28.40px;top:118.50px;font-size:12px;font-weight:700;font-style:normal;color:#9c0808;letter-spacing:0.262px;word-spacing:0.5px;'>APServ Remote Configuration</div>
<div class='t' style='left:28.00px;top:192.60px;font-size:12px;font-weight:700;font-style:normal;color:#9c0808;letter-spacing:0.040px;word-spacing:0.5px;'>DHCP Client</div>
<div class='t' style='left:27.80px;top:294.75px;font-size:12px;font-weight:700;font-style:normal;color:#9c0808;letter-spacing:0.020px;word-spacing:0.5px;'>DHCP Server</div>
<div class='t' style='left:29.40px;top:144.75px;font-size:12px;font-weight:400;font-style:normal;color:#30303a;letter-spacing:-0.620px;word-spacing:1.5px;'>APServ</div>
<div class='t' style='left:264.80px;top:144.60px;font-size:12px;font-weight:400;font-style:normal;color:#30303a;letter-spacing:-0.460px;word-spacing:1.5px;'>Enable</div>
<div class='t' style='left:330.90px;top:144.60px;font-size:12px;font-weight:400;font-style:normal;color:#30303a;letter-spacing:-0.667px;word-spacing:1.5px;'>Disable</div>
<div class='t' style='left:28.60px;top:218.80px;font-size:12px;font-weight:400;font-style:normal;color:#30303a;letter-spacing:-0.157px;word-spacing:1.5px;'>Set Vendorclass</div>
<div class='t' style='left:28.60px;top:248.30px;font-size:12px;font-weight:400;font-style:normal;color:#30303a;letter-spacing:-0.156px;word-spacing:1.5px;'>Request IP</div>
<div class='t' style='left:28.60px;top:322.50px;font-size:12px;font-weight:400;font-style:normal;color:#30303a;letter-spacing:-0.525px;word-spacing:1.5px;'>Use JFFS2 for client lease DB</div>
<div class='t' style='left:242.90px;top:322.40px;font-size:12px;font-weight:400;font-style:italic;color:#8a8a8a;letter-spacing:0.608px;word-spacing:0px;'>(Not mounted)</div>
<div class='t' style='left:28.60px;top:350.75px;font-size:12px;font-weight:400;font-style:normal;color:#30303a;letter-spacing:-0.477px;word-spacing:1.5px;'>Use NVRAM for client lease DB</div>
<div class='t' style='left:28.40px;top:380.70px;font-size:12px;font-weight:400;font-style:normal;color:#30303a;letter-spacing:-0.490px;word-spacing:1.5px;'>Used Domain</div>
<div class='t' style='left:248.70px;top:379.75px;font-size:12px;font-weight:400;font-style:normal;color:#30303a;letter-spacing:-0.533px;word-spacing:1.5px;'>LAN &amp; WLAN</div>
<div class='t' style='left:28.40px;top:408.80px;font-size:12px;font-weight:400;font-style:normal;color:#30303a;letter-spacing:-0.511px;word-spacing:1.5px;'>LAN Domain</div>
<div class='t' style='left:29.50px;top:437.50px;font-size:12px;font-weight:400;font-style:normal;color:#30303a;letter-spacing:-0.326px;word-spacing:1.5px;'>Additional DHCPd Options</div>
<div class='t' style='left:39.25px;top:513.50px;font-size:12px;font-weight:400;font-style:normal;color:#ffffff;letter-spacing:-0.246px;word-spacing:1.5px;-webkit-text-stroke:0.3px #fff;'>Static Leases</div>
<div class='t' style='left:39.25px;top:534.30px;font-size:12px;font-weight:400;font-style:normal;color:#ffffff;letter-spacing:-0.425px;word-spacing:1.5px;-webkit-text-stroke:0.3px #fff;'>MAC Address</div>
<div class='t' style='left:188.70px;top:534.30px;font-size:12px;font-weight:400;font-style:normal;color:#ffffff;letter-spacing:-0.275px;word-spacing:1.5px;-webkit-text-stroke:0.3px #fff;'>Host Name</div>
<div class='t' style='left:336.50px;top:534.30px;font-size:12px;font-weight:400;font-style:normal;color:#ffffff;letter-spacing:-0.111px;word-spacing:1.5px;-webkit-text-stroke:0.3px #fff;'>IP Address</div>
<div class='t' style='left:485.50px;top:534.30px;font-size:12px;font-weight:400;font-style:normal;color:#ffffff;letter-spacing:-0.337px;word-spacing:1.5px;-webkit-text-stroke:0.3px #fff;'>Client Lease Time</div>
<div class='t' style='left:552.60px;top:558.10px;font-size:12px;font-weight:400;font-style:normal;color:#1e1e2a;letter-spacing:0.083px;word-spacing:1.5px;'>minutes</div>
<div class='t' style='left:552.60px;top:584.10px;font-size:12px;font-weight:400;font-style:normal;color:#1e1e2a;letter-spacing:0.083px;word-spacing:1.5px;'>minutes</div>
<div class='t' style='left:122.75px;top:495.50px;font-size:11px;font-weight:400;font-style:normal;color:#ff1020;letter-spacing:-0.292px;word-spacing:1.5px;text-shadow:1.5px 1.5px 1px rgba(0,0,0,0.35);'>Physical Address from Step 2 here</div>
<div class='t' style='left:318.50px;top:497.10px;font-size:11px;font-weight:400;font-style:normal;color:#ff1020;letter-spacing:-0.272px;word-spacing:1.5px;text-shadow:1.5px 1.5px 1px rgba(0,0,0,0.35);'>IP Address from Step 2 h</div>
<!-- annotations -->
<div class="box" style="left:28px;top:504px;width:85px;height:31px"></div>
<div class="box" style="left:120px;top:498px;width:183px;height:18px"></div>
<div class="box" style="left:315px;top:499px;width:136px;height:18px"></div>
<svg class="a" style="left:0;top:480px" width="640" height="128">
 <defs><filter id="sh" x="-50%" y="-50%" width="200%" height="200%"><feGaussianBlur stdDeviation="1.2"/></filter></defs>
 <g opacity="0.35" filter="url(#sh)" transform="translate(3,2)">
  <rect x="133" y="41" width="2" height="28" fill="#000"/><polygon points="130,68 137.5,68 134,78" fill="#000"/>
  <rect x="401" y="40" width="2" height="28" fill="#000"/><polygon points="399,67 406.5,67 402.5,77.5" fill="#000"/>
 </g>
 <rect x="133" y="41" width="2" height="28" fill="#ff0000"/><polygon points="130,68 137.5,68 134,78" fill="#ff0000"/>
 <rect x="401" y="40" width="2" height="28" fill="#ff0000"/><polygon points="399,67 406.5,67 402.5,77.5" fill="#ff0000"/>
</svg>
</body></html>
